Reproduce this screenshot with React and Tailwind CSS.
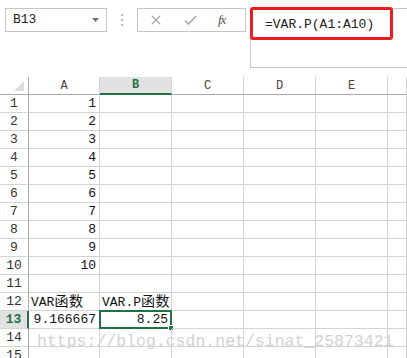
import React from 'react';

const mono = "font-['Liberation_Mono','Noto_Sans_CJK_SC',monospace]";

const columns = [
  { key: 'A', w: 'w-[71px]' },
  { key: 'B', w: 'w-[72px]' },
  { key: 'C', w: 'w-[72px]' },
  { key: 'D', w: 'w-[72px]' },
  { key: 'E', w: 'w-[72px]' },
  { key: '', w: 'flex-1' },
];

const data = {
  1: { A: '1' }, 2: { A: '2' }, 3: { A: '3' }, 4: { A: '4' }, 5: { A: '5' },
  6: { A: '6' }, 7: { A: '7' }, 8: { A: '8' }, 9: { A: '9' }, 10: { A: '10' },
  12: { A: 'VAR函数', B: 'VAR.P函数' },
  13: { A: '9.166667', B: '8.25' },
};

// text cells are left aligned, numbers right aligned like excel
const isNum = (v) => /^[0-9.]+$/.test(v);

function CellText({ value }) {
  if (!value) return null;
  const parts = value.split(/([\u4e00-\u9fff]+)/);
  return (
    <span className="whitespace-nowrap">
      {parts.map((p, i) =>
        /[\u4e00-\u9fff]/.test(p)
          ? <span key={i} className="font-['Noto_Sans_CJK_SC',sans-serif] text-[14px] tracking-[0.5px]">{p}</span>
          : <span key={i}>{p}</span>
      )}
    </span>
  );
}

function Toolbar() {
  return (
    <div className="flex items-start h-[68px] pt-[8px]">
      <div className="ml-[5px] w-[102px] h-[24px] border border-[#c6c6c6] flex items-center justify-between pl-[7px] pr-[7px]">
        <span className={`${mono} text-[13px] text-[#222]`}>B13</span>
        <svg width="7" height="4" viewBox="0 0 7 4"><path d="M0 0h7L3.5 4z" fill="#6e6e6e" /></svg>
      </div>
      <div className="w-[30px] h-[24px] flex flex-col items-center justify-center gap-[3px]">
        <span className="w-[2px] h-[2px] bg-[#b5b5b5]" />
        <span className="w-[2px] h-[2px] bg-[#b5b5b5]" />
        <span className="w-[2px] h-[2px] bg-[#b5b5b5]" />
      </div>
      <div className="w-[109px] h-[24px] border border-[#c6c6c6] flex items-center">
        <svg className="ml-[13px]" width="10" height="10" viewBox="0 0 10 10">
          <path d="M1 1L9 9M9 1L1 9" stroke="#a8a8a8" strokeWidth="1.3" />
        </svg>
        <svg className="ml-[23px]" width="13" height="10" viewBox="0 0 13 10">
          <path d="M1 5.5L4.5 9L12 1" stroke="#a8a8a8" strokeWidth="1.6" fill="none" />
        </svg>
        <span className="ml-[21px] font-['Liberation_Serif',serif] italic text-[13px] text-[#555] tracking-[-1px]">fx</span>
      </div>
      <div className="relative ml-[4px] flex-1 h-[60px] border-l border-t border-b border-[#c6c6c6]">
        <div className="absolute -left-[1px] -top-[2px] w-[143px] h-[33px] border-[3px] border-[#f01d1d] rounded-[3px]" />
        <div className={`${mono} text-[13px] text-[#222] pl-[14px] pt-[6px]`}>=VAR.P(A1:A10)</div>
      </div>
    </div>
  );
}

function HeaderRow() {
  return (
    <div className="flex h-[18px]">
      <div className="w-[29px] border-r border-b border-[#ababab] flex items-end justify-end pr-[4px] pb-[3px]">
        <svg width="10" height="10" viewBox="0 0 10 10"><path d="M10 0V10H0z" fill="#dcdcdc" /></svg>
      </div>
      {columns.map((c) => {
        const active = c.key === 'B';
        return (
          <div
            key={c.key || 'x'}
            className={`${c.w} flex items-center justify-center text-[12px] ${mono} ${
              active
                ? 'bg-[#e1e1e1] text-[#217346] font-bold border-b-2 border-b-[#217346] border-r border-r-[#d4d4d4]'
                : 'text-[#444] border-b border-b-[#ababab] border-r border-r-[#d4d4d4]'
            }`}
          >
            {c.key}
          </div>
        );
      })}
    </div>
  );
}

function Row({ n }) {
  const row = data[n] || {};
  const active = n === 13;
  return (
    <div className="flex h-[18px]">
      <div
        className={`w-[29px] border-b border-b-[#d4d4d4] flex items-center justify-center text-[13px] ${mono} ${
          active
            ? 'bg-[#e1e1e1] text-[#217346] font-bold border-r-2 border-r-[#217346]'
            : 'text-[#333] border-r border-r-[#ababab]'
        }`}
      >
        {n}
      </div>
      {columns.map((c) => {
        const v = row[c.key];
        const selected = active && c.key === 'B';
        return (
          <div
            key={c.key || 'x'}
            className={`relative ${c.w} border-r border-b border-[#d4d4d4] flex items-center text-[13px] text-[#111] ${mono} ${
              v && isNum(v) ? 'justify-end pr-[3px]' : 'justify-start pl-[2px]'
            }`}
          >
            <CellText value={v} />
            {selected && (
              <>
                <div className="absolute -left-[1px] -top-[1px] w-[73px] h-[19px] border-2 border-[#217346]" />
                <div className="absolute -right-[3px] -bottom-[3px] w-[6px] h-[6px] bg-[#217346] border border-white" />
              </>
            )}
          </div>
        );
      })}
    </div>
  );
}

export default function App() {
  return (
    <div className="relative w-[407px] h-[358px] overflow-hidden bg-white">
      <Toolbar />
      <div className="mt-[9px]">
        <HeaderRow />
        {Array.from({ length: 15 }, (_, i) => (
          <Row key={i + 1} n={i + 1} />
        ))}
      </div>
      <div className="absolute left-[37px] top-[330px] font-['Liberation_Mono',monospace] text-[16.5px] text-[#d2d2d2] whitespace-nowrap pointer-events-none">
        https://blog.csdn.net/sinat_25873421
      </div>
    </div>
  );
}
